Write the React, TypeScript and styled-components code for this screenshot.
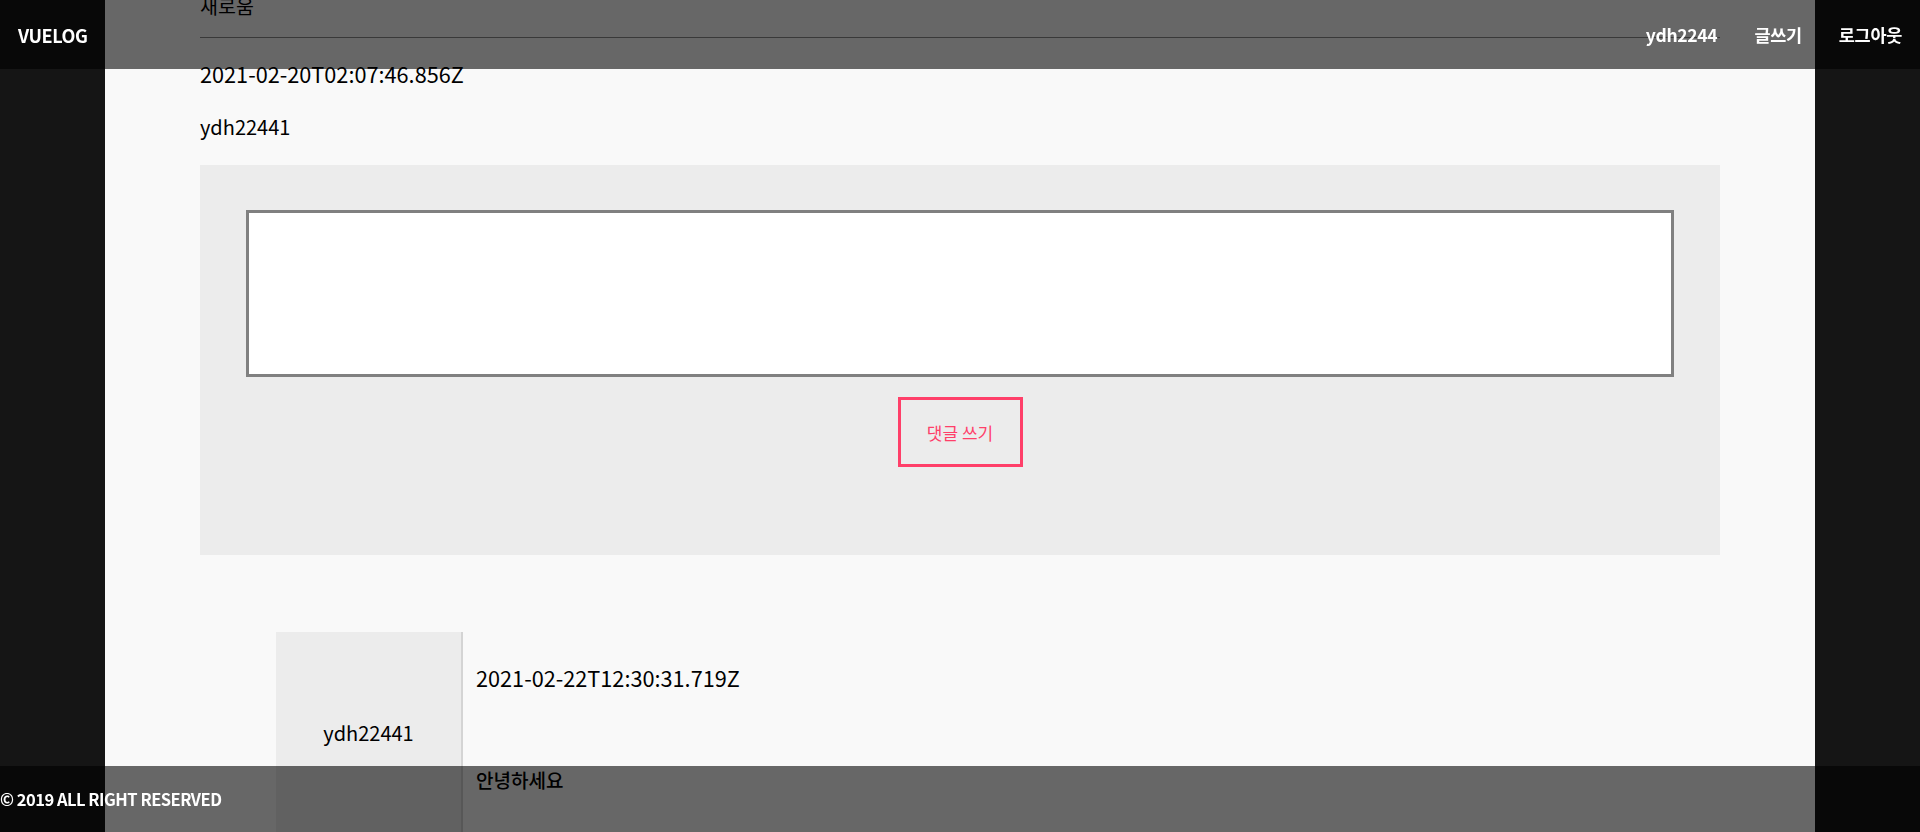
import styled, { createGlobalStyle } from "styled-components";
import { useLayoutEffect, useRef } from "react";

interface Comment {
  author: string;
  createdAt: string;
  text: string;
}

const comments: Comment[] = [
  { author: "ydh22441", createdAt: "2021-02-22T12:30:31.719Z", text: "안녕하세요" },
];

// where the divider sits in the viewport once the page is scrolled
const RULE_OFFSET = 37;

export default function App() {
  const ruleRef = useRef<HTMLHRElement>(null);

  useLayoutEffect(() => {
    if (!ruleRef.current) return;
    const top = ruleRef.current.getBoundingClientRect().top + window.scrollY;
    window.scrollTo(0, top - RULE_OFFSET);
  }, []);

  return (
    <>
      <GlobalStyle />
      <Header>
        <Logo>VUELOG</Logo>
        <Nav>
          <NavItem>ydh2244</NavItem>
          <NavItem>글쓰기</NavItem>
          <NavItem>로그아웃</NavItem>
        </Nav>
      </Header>

      <Column>
        <Post>
          <Title>새로움</Title>
          <Rule ref={ruleRef} />
          <Meta $date>2021-02-20T02:07:46.856Z</Meta>
          <Meta>ydh22441</Meta>
        </Post>

        <CommentForm>
          <TextArea />
          <SubmitButton type="button">댓글 쓰기</SubmitButton>
        </CommentForm>

        <CommentList>
          {comments.map((c, i) => (
            <CommentItem key={i}>
              <CommentAuthor>{c.author}</CommentAuthor>
              <CommentBody>
                <CommentDate>{c.createdAt}</CommentDate>
                <CommentText>{c.text}</CommentText>
              </CommentBody>
            </CommentItem>
          ))}
        </CommentList>
      </Column>

      <Footer>© 2019 ALL RIGHT RESERVED</Footer>
    </>
  );
}

const GlobalStyle = createGlobalStyle`
  html {
    scrollbar-width: none;
  }
  html::-webkit-scrollbar {
    display: none;
  }
  body {
    margin: 0;
    background: #151515;
    font-family: "Noto Sans CJK KR", "Noto Sans", sans-serif;
    color: #000;
  }
  * {
    box-sizing: border-box;
  }
`;

const Header = styled.header`
  position: fixed;
  top: 0;
  left: 0;
  right: 0;
  height: 69px;
  z-index: 10;
  display: flex;
  align-items: center;
  justify-content: space-between;
  padding: 0 18px;
  background: rgba(0, 0, 0, 0.59);
  color: #fff;
  font-weight: 700;
  font-size: 17.5px;
`;

const Logo = styled.div`
  font-size: 18px;
  letter-spacing: -0.4px;
`;

const Nav = styled.nav`
  display: flex;
  gap: 37px;
`;

const NavItem = styled.span`
  cursor: pointer;
  letter-spacing: -0.3px;
`;

const Column = styled.main`
  width: 1710px;
  margin: 0 auto;
  min-height: 100vh;
  background: #f9f9f9;
  padding: 100px 95px 160px;
`;

const Post = styled.section`
  display: flex;
  flex-direction: column;
`;

const Title = styled.h2`
  margin: 0;
  font-size: 19.5px;
  font-weight: 400;
  line-height: 27px;
`;

const Rule = styled.hr`
  width: 100%;
  margin: 18px 0 21px;
  border: 0;
  border-top: 1px solid #8c8c8c;
`;

const Meta = styled.p<{ $date?: boolean }>`
  margin: 0 0 ${(p) => (p.$date ? "23px" : "21px")};
  font-size: ${(p) => (p.$date ? "21.7px" : "20px")};
  line-height: 30px;
`;

const CommentForm = styled.div`
  display: flex;
  flex-direction: column;
  align-items: center;
  margin-top: 2px;
  padding: 45px 46px 88px;
  background: #ececec;
`;

const TextArea = styled.textarea`
  width: 100%;
  height: 167px;
  border: 3px solid #808080;
  background: #fff;
  resize: none;
  outline: none;
  font: inherit;
`;

const SubmitButton = styled.button`
  margin-top: 20px;
  width: 125px;
  height: 70px;
  border: 3px solid #ff3f69;
  background: transparent;
  color: #ff3f69;
  font-family: inherit;
  font-size: 17px;
  cursor: pointer;
`;

const CommentList = styled.ul`
  list-style: none;
  width: 90%;
  margin: 77px auto 0;
  padding: 0;
`;

const CommentItem = styled.li`
  display: flex;
  min-height: 200px;
`;

const CommentAuthor = styled.div`
  flex: 0 0 187px;
  display: flex;
  align-items: center;
  justify-content: center;
  background: #ececec;
  border-right: 2px solid #d4d4d4;
  font-size: 20px;
`;

const CommentBody = styled.div`
  flex: 1;
  padding: 31px 13px 0;
`;

const CommentDate = styled.div`
  font-size: 21.7px;
  line-height: 30px;
`;

const CommentText = styled.div`
  margin-top: 72px;
  font-size: 19px;
  font-weight: 500;
  line-height: 30px;
`;

const Footer = styled.footer`
  position: fixed;
  left: 0;
  right: 0;
  bottom: 0;
  height: 66px;
  z-index: 10;
  display: flex;
  align-items: center;
  background: rgba(0, 0, 0, 0.59);
  color: #fff;
  font-weight: 700;
  font-size: 16.5px;
  letter-spacing: -0.5px;
`;
